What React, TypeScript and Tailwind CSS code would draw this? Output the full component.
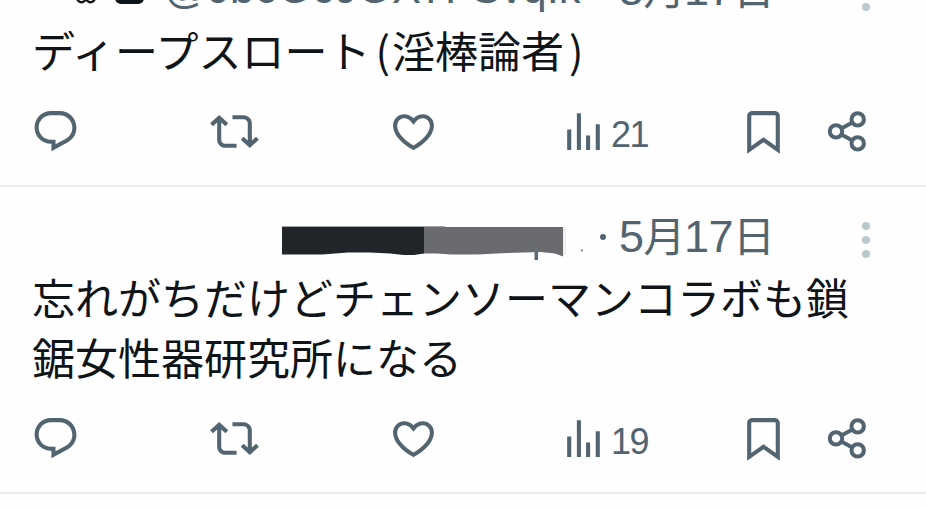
import React from 'react';

const ICONS = {
  reply:
    'M1.751 10c0-4.42 3.584-8 8.005-8h4.366c4.49 0 8.129 3.64 8.129 8.13 0 2.96-1.607 5.68-4.196 7.11l-8.054 4.46v-3.69h-.067c-4.49.1-8.183-3.51-8.183-8.01zm8.005-6c-3.317 0-6.005 2.69-6.005 6 0 3.37 2.77 6.08 6.138 6.01l.351-.01h1.761v2.3l5.087-2.81c1.951-1.08 3.163-3.13 3.163-5.36 0-3.39-2.744-6.13-6.129-6.13H9.756z',
  repost:
    'M4.5 3.88l4.432 4.14-1.364 1.46L5.5 7.55V16c0 1.1.896 2 2 2H13v2H7.5c-2.209 0-4-1.79-4-4V7.55L1.432 9.48.068 8.02 4.5 3.88zM16.5 6H11V4h5.5c2.209 0 4 1.79 4 4v8.45l2.068-1.93 1.364 1.46-4.432 4.14-4.432-4.14 1.364-1.46 2.068 1.93V8c0-1.1-.896-2-2-2z',
  like:
    'M16.697 5.5c-1.222-.06-2.679.51-3.89 2.16l-.805 1.09-.806-1.09C9.984 6.01 8.526 5.44 7.304 5.5c-1.243.07-2.349.78-2.91 1.91-.552 1.12-.633 2.78.479 4.82 1.074 1.97 3.257 4.27 7.129 6.61 3.87-2.34 6.052-4.64 7.126-6.61 1.111-2.04 1.03-3.7.477-4.82-.561-1.13-1.666-1.84-2.908-1.91zm4.187 7.69c-1.351 2.48-4.001 5.12-8.379 7.67l-.503.3-.504-.3c-4.379-2.55-7.029-5.19-8.382-7.67-1.36-2.5-1.41-4.86-.514-6.67.887-1.79 2.647-2.91 4.601-3.01 1.651-.09 3.368.56 4.798 2.01 1.429-1.45 3.146-2.1 4.796-2.01 1.954.1 3.714 1.22 4.601 3.01.896 1.81.846 4.17-.514 6.67z',
  views:
    'M8.75 21V3h2v18h-2zM18 21V8.5h2V21h-2zM4 21l.004-10h2L6 21H4zm9.248 0v-7h2v7h-2z',
  bookmark:
    'M4 4.5C4 3.12 5.119 2 6.5 2h11C18.881 2 20 3.12 20 4.5v18.44l-8-5.71-8 5.71V4.5zM6.5 4c-.276 0-.5.22-.5.5v14.56l6-4.29 6 4.29V4.5c0-.28-.224-.5-.5-.5h-11z',
};

function Icon({ name }: { name: keyof typeof ICONS }) {
  return (
    <svg viewBox="0 0 24 24" className="h-[49px] w-[49px] shrink-0" fill="currentColor">
      <path d={ICONS[name]} />
    </svg>
  );
}

function ShareIcon() {
  return (
    <svg viewBox="0 0 49 49" className="h-[49px] w-[49px] shrink-0" fill="none" stroke="currentColor" strokeWidth="4">
      <circle cx="34.7" cy="12.4" r="6.2" />
      <circle cx="13" cy="24.4" r="6.2" />
      <circle cx="34.7" cy="36.4" r="6.2" />
      <path d="M18.4 21.4l10.9-6M18.4 27.4l10.9 6" />
    </svg>
  );
}

function MoreButton() {
  return (
    <button className="mt-1 ml-auto flex flex-col gap-1.5" aria-label="More">
      <span className="h-2 w-2 rounded-full bg-[#b9c9ce]" />
      <span className="h-2 w-2 rounded-full bg-[#b9c9ce]" />
      <span className="h-2 w-2 rounded-full bg-[#b9c9ce]" />
    </button>
  );
}

// Name and handle painted over with a marker
function HiddenAuthor() {
  return (
    <svg viewBox="0 0 568 62" className="h-[62px] w-[568px] shrink-0">
      <path d="M0 23h250v24H80l-60-1-20-4z" fill="#fdfdfd" />
      <path d="M541 20h3v28h-3z" fill="#eef1f0" />
      <path d="M260 20h142v26.5l-10 1.500h-10l-14-1.500-20-1h-22l-26 2H260z" fill="#212529" />
      <path d="M402 20h139v29.500l-8-3-14-1.500-34 1-30 1.500h-26l-14-1h-13z" fill="#696b6e" />
      <path d="M260 19.500h163" stroke="#a5a8aa" strokeWidth="1" />
      <path d="M514.300 45v8" stroke="#5c6c77" strokeWidth="3.600" />
      <circle cx="560" cy="43.500" r="1" fill="#5c6c77" />
    </svg>
  );
}

function Author() {
  return (
    <>
      <span className="mb-1.5 ml-[54px] flex h-8 w-[88px] shrink-0 items-end gap-[19px]">
        <svg viewBox="0 0 20 12" className="h-3 w-5" fill="none" stroke="#0f1419" strokeWidth="2.500">
          <circle cx="5.500" cy="6" r="4.200" />
          <circle cx="14.500" cy="6" r="4.200" />
        </svg>
        <span className="h-8 w-[29px] rounded-md bg-[#0f1419]" />
      </span>
      <span className="w-[426px] shrink-0 pb-1 text-[43.5px] whitespace-nowrap">@Jb6Oc9OX7FSvqIk</span>
    </>
  );
}

function PostDate() {
  return (
    <time className="mb-0.5 ml-2.5 flex items-center text-[45px] leading-[60px] tracking-[-0.5px] whitespace-nowrap">
      <span className="mr-[13px] h-1.5 w-1.5 rounded-full bg-current" />
      <span>
        5<span className="text-[42px] tracking-[-1.5px]">月</span>17
        <span className="text-[42px] tracking-[-1px]">日</span>
      </span>
    </time>
  );
}

// Parentheses get a little extra room between full-width characters
function Line({ text }: { text: string }) {
  return (
    <p>
      {text.split(/([()])/).map((part, i) => (
        <span key={i} className={part === '(' || part === ')' ? 'mr-0.5 ml-[5px]' : ''}>
          {part}
        </span>
      ))}
    </p>
  );
}

interface PostProps {
  author: React.ReactNode;
  lines: string[];
  views: number;
}

function Post({ author, lines, views }: PostProps) {
  return (
    <article className="border-b-2 border-[#e8ecec] pt-5">
      <header className="flex h-[62px] items-center pr-14 pl-[22px] text-[#536471]">
        {author}
        <PostDate />
        <MoreButton />
      </header>
      <div className="-mt-[3px] mb-[3px] pl-8 font-['Noto_Sans_CJK_JP',sans-serif] text-[43px] leading-[60px] whitespace-nowrap text-[#0f1419]">
        {lines.map((line) => (
          <Line key={line} text={line} />
        ))}
      </div>
      <footer className="flex h-[103px] items-center pb-1 pl-[31px] text-[#536471]">
        <div className="w-[179px]"><Icon name="reply" /></div>
        <div className="w-[179px]"><Icon name="repost" /></div>
        <div className="w-[170px]"><Icon name="like" /></div>
        <div className="flex w-[180px] items-center">
          <Icon name="views" />
          <span className="mt-1.5 ml-[3px] text-[36px] leading-none tracking-[-1.5px]">{views}</span>
        </div>
        <div className="w-[84px]"><Icon name="bookmark" /></div>
        <ShareIcon />
      </footer>
    </article>
  );
}

export default function App() {
  return (
    <main className="flex h-[508px] w-[926px] flex-col justify-end overflow-hidden bg-[#fefefe] pb-[14px] font-['Liberation_Sans','Noto_Sans_CJK_JP',sans-serif]">
      <Post author={<Author />} lines={['ディープスロート(淫棒論者)']} views={21} />
      <Post
        author={<HiddenAuthor />}
        lines={['忘れがちだけどチェンソーマンコラボも鎖', '鋸女性器研究所になる']}
        views={19}
      />
    </main>
  );
}
